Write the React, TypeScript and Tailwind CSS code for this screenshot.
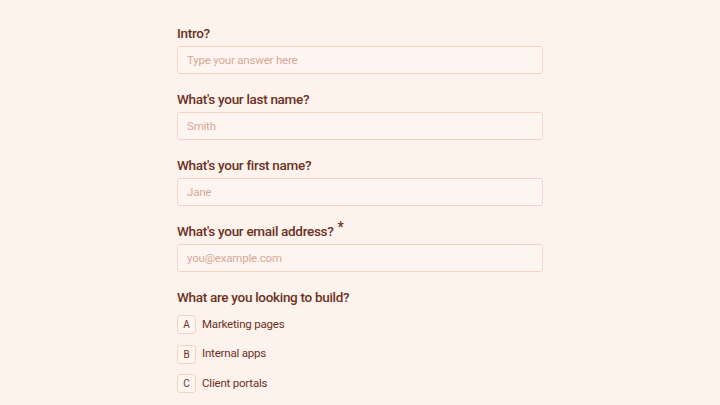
import React from 'react';

const fields = [
  { label: 'Intro?', placeholder: 'Type your answer here' },
  { label: "What's your last name?", placeholder: 'Smith' },
  { label: "What's your first name?", placeholder: 'Jane' },
  { label: "What's your email address?", placeholder: 'you@example.com', required: true },
];

const options = [
  { key: 'A', name: 'Marketing pages' },
  { key: 'B', name: 'Internal apps' },
  { key: 'C', name: 'Client portals' },
];

const App: React.FC = () => {
  return (
    <div className="h-[405px] overflow-hidden bg-[#fdf2ec] text-[#6b3123] font-['Roboto','Lato',sans-serif]">
      <div className="w-[366px] mx-auto pt-[24px]">
        {fields.map((f) => (
          <div key={f.label} className="mb-[16px]">
            <label className="block text-[13.5px] font-medium tracking-[-0.3px] leading-[18px] mb-[4px]">
              {f.label}
              {f.required && <span className="ml-[4px] relative top-[-4px] text-[14px]">*</span>}
            </label>
            <input
              type="text"
              placeholder={f.placeholder}
              className="w-full h-[28px] px-[9px] rounded-[3px] border border-[#f3d3c3] bg-[#fef5f0] text-[11.5px] tracking-[-0.2px] placeholder-[#d6a897] outline-none"
            />
          </div>
        ))}

        <div>
          <div className="text-[13.5px] font-medium tracking-[-0.3px] leading-[18px] mb-[9px]">What are you looking to build?</div>
          <div className="flex flex-col gap-[10.5px]">
            {options.map((o) => (
              <div key={o.key} className="flex items-center gap-[6px]">
                <span className="w-[19px] h-[19px] flex items-center justify-center rounded-[3px] border border-[#f3d3c3] bg-[#fef5f0] text-[10px]">
                  {o.key}
                </span>
                <span className="text-[11.5px] tracking-[-0.2px]">{o.name}</span>
              </div>
            ))}
          </div>
        </div>
      </div>
    </div>
  );
};

export default App;
